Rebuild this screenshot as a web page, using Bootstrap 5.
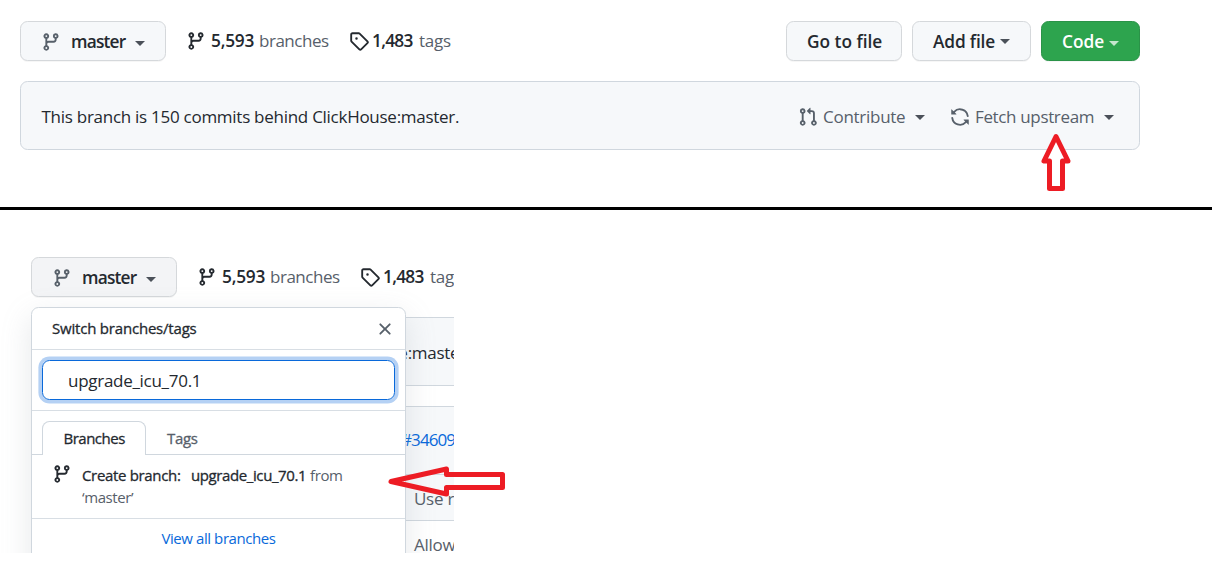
<!DOCTYPE html>
<html lang="en">
<head>
<meta charset="utf-8">
<title>Branches</title>
<link href="https://cdn.jsdelivr.net/npm/bootstrap@5.3.0/dist/css/bootstrap.min.css" rel="stylesheet">
<style>
body{margin:0;width:1212px;height:576px;overflow:hidden;background:#fff;color:#24292f;font:400 17px/24px "Open Sans","Noto Sans",sans-serif;letter-spacing:-.27px}
.ico{width:20px;height:20px;flex:none;fill:currentColor}
.pane-top{height:210px;border-bottom:3px solid #000;padding:21px 72px 0 20px}
.gh-btn{height:40px;border:1px solid #d5d8db;border-radius:7.5px;background:#f6f8fa;color:#24292f;font-weight:600;font-size:17.3px;line-height:24px;padding:1px 0 0 20px;display:flex;align-items:center;box-shadow:0 1px 0 rgba(27,31,36,.04);flex:none;white-space:nowrap}
.gh-btn .ico{color:#57606a}
.gh-btn.branch-btn{width:146px;padding-top:2px;letter-spacing:-.8px}
.branch-btn .label{width:64px;margin-left:10px}
.branch-btn .tri{margin-top:2px}
.gh-btn.pressed{background:#f3f4f6}
.tri{width:0;height:0;border:5px solid transparent;border-top-color:#4b5159;border-bottom:0;flex:none}
.stat{display:flex;align-items:center;height:40px;white-space:nowrap}
.stat .num{font-weight:600;font-size:17.3px;letter-spacing:-.2px}
.soft{color:#57606a}
.s-branches{margin-left:20px;width:163px}
.s-branches .num{width:48px;margin-left:5px}
.s-branches .soft{letter-spacing:-.48px}
.s-tags .num{width:47px;margin-left:3px;letter-spacing:-.7px}
.btn-go{width:116px}.btn-add{width:119px}.btn-code{width:99px}
.btn-add .label{width:67px;letter-spacing:-.15px}
.gh-btn.btn-code{background:#2da44e;border-color:#2a9348;color:#fff}
.btn-code .label{width:47px}
.btn-code .tri{border-top-color:#c5e6ce;margin-top:3px}
.notice{height:69px;border:1px solid #d0d7de;border-radius:7.5px;background:#f6f8fa;white-space:nowrap;padding:2px 25px 0 20.5px;display:flex;align-items:center}
.pane-top .notice{margin-top:20px}
.notice .act{color:#57606a}
.act .label{letter-spacing:-.35px}
.act .tri{margin-top:2px}
.act-c .label{width:92px;margin-left:5px}
.act-f .label{width:129px;margin-left:5px}
.act-c .label{letter-spacing:-.27px}
.act-c{margin-right:25px}
.pane-low{width:454px;height:343px;overflow:hidden;position:relative;padding:47px 0 0 31px}
.under{width:1120px}
.pane-low .notice{margin-top:20px}
.files{margin-top:20px;border:1px solid #d0d7de;border-radius:7.5px;height:200px;padding-left:382px}
.files>div{margin-left:-382px;padding-left:382px;border-bottom:1px solid #d0d7de;white-space:nowrap}
.f1{height:68px;background:#f6f8fa;line-height:66px;color:#0969da}
.f2{height:46px;background:#f6f8fa;line-height:48px;color:#57606a}
.f3{height:48px;line-height:47px;color:#57606a}
.f1 span{display:inline-block;margin-left:-13px;letter-spacing:-.9px}
.pop{position:absolute;left:31px;top:97px;width:375px;height:300px;background:#fff;border:1px solid #d0d7de;border-radius:7.5px;box-shadow:0 10px 30px rgba(140,149,159,.22);font-size:15px;line-height:22px}
.pop-head{height:42px;border-bottom:1px solid #d8dee4;padding:0 10px 0 20px}
.pop-head .title{letter-spacing:-.2px;margin-top:-2px}
.medium{font-weight:500;-webkit-text-stroke:.3px currentColor}
.pop-find{height:61px;border-bottom:1px solid #d8dee4;padding:10px 10px 0}
.pop-find .field{width:353px;height:40px;border:1px solid #0969da;border-radius:7.5px;box-shadow:0 0 0 3.6px #b5d1f4;padding:1px 0 0 25px;font-size:17px;line-height:38px;letter-spacing:-.28px}
.pop-tabs{height:44px;border-bottom:1px solid #d0d7de;padding:10px 0 0 10px}
.pop-tabs .on{width:104px;height:34px;border:1px solid #d0d7de;border-bottom:0;border-radius:7.5px 7.5px 0 0;background:#fff;padding:0 0 0 20.5px;line-height:32px;letter-spacing:-.5px}
.pop-tabs .off{margin-left:21px;line-height:35px;color:#57606a;letter-spacing:-.3px}
.pop-new{height:64px;border-bottom:1px solid #d8dee4;padding:9px 0 0 20px;white-space:nowrap}
.pop-new .txt{margin-left:10px}
.pop-new .nm{display:inline-block;width:119px;letter-spacing:-.4px}
.pop-new .cr{display:inline-block;width:109px;letter-spacing:-.33px}
.pop-new .soft{letter-spacing:-.4px}
.pop-all{color:#0969da;text-align:center;line-height:38px;letter-spacing:-.42px}
.pointer{position:absolute;fill:none;stroke:#ed1c24;stroke-width:5}
</style>
</head>
<body>
<svg class="d-none">
<symbol id="fork" viewBox="0 0 16 16"><path fill-rule="evenodd" d="M11.75 2.5a.75.75 0 100 1.5.75.75 0 000-1.5zm-2.25.75a2.25 2.25 0 113 2.122V6A2.5 2.5 0 0110 8.5H6a1 1 0 00-1 1v1.128a2.251 2.251 0 11-1.5 0V5.372a2.25 2.25 0 111.5 0v1.836A2.492 2.492 0 016 7h4a1 1 0 001-1v-.628A2.25 2.25 0 019.5 3.25zM4.25 12a.75.75 0 100 1.5.75.75 0 000-1.5zM3.5 3.25a.75.75 0 111.5 0 .75.75 0 01-1.5 0z"/></symbol>
<symbol id="tag" viewBox="0 0 16 16"><path fill-rule="evenodd" d="M2.5 7.775V2.75a.25.25 0 01.25-.25h5.025a.25.25 0 01.177.073l6.25 6.25a.25.25 0 010 .354l-5.025 5.025a.25.25 0 01-.354 0l-6.25-6.25a.25.25 0 01-.073-.177zm-1.5 0V2.75C1 1.784 1.784 1 2.75 1h5.025c.464 0 .91.184 1.238.513l6.25 6.25a1.75 1.75 0 010 2.474l-5.026 5.026a1.75 1.75 0 01-2.474 0l-6.25-6.25A1.75 1.75 0 011 7.775zM6 5a1 1 0 100 2 1 1 0 000-2z"/></symbol>
<symbol id="pull" viewBox="0 0 16 16"><path fill-rule="evenodd" d="M7.177 3.073L9.573.677A.25.25 0 0110 .854v4.792a.25.25 0 01-.427.177L7.177 3.427a.25.25 0 010-.354zM3.75 2.5a.75.75 0 100 1.5.75.75 0 000-1.5zm-2.25.75a2.25 2.25 0 113 2.122v5.256a2.251 2.251 0 11-1.5 0V5.372A2.25 2.25 0 011.5 3.25zM11 2.5h-1V4h1a1 1 0 011 1v5.628a2.251 2.251 0 101.5 0V5A2.5 2.5 0 0011 2.5zm1 10.25a.75.75 0 111.5 0 .75.75 0 01-1.5 0zM3.75 12a.75.75 0 100 1.5.75.75 0 000-1.5z"/></symbol>
<symbol id="sync" viewBox="0 0 16 16"><path fill-rule="evenodd" d="M8 2.5a5.487 5.487 0 00-4.131 1.869l1.204 1.204A.25.25 0 014.896 6H1.25A.25.25 0 011 5.75V2.104a.25.25 0 01.427-.177l1.38 1.38A7.001 7.001 0 0114.95 7.16a.75.75 0 11-1.49.178A5.501 5.501 0 008 2.5zM1.705 8.005a.75.75 0 01.834.656 5.501 5.501 0 009.592 2.97l-1.204-1.204a.25.25 0 01.177-.427h3.646a.25.25 0 01.25.25v3.646a.25.25 0 01-.427.177l-1.38-1.38A7.001 7.001 0 011.05 8.84a.75.75 0 01.656-.834z"/></symbol>
<symbol id="close" viewBox="0 0 16 16"><path d="M3.72 3.72a.75.75 0 011.06 0L8 6.94l3.22-3.22a.75.75 0 111.06 1.06L9.06 8l3.22 3.22a.75.75 0 11-1.06 1.06L8 9.06l-3.22 3.22a.75.75 0 01-1.06-1.06L6.94 8 3.72 4.78a.75.75 0 010-1.06z"/></symbol>
</svg>

<section class="pane-top position-relative">
  <div class="d-flex">
    <button class="gh-btn branch-btn text-start"><svg class="ico"><use href="#fork"/></svg><span class="label">master</span><span class="tri"></span></button>
    <div class="stat s-branches"><svg class="ico"><use href="#fork"/></svg><span class="num">5,593</span><span class="soft">branches</span></div>
    <div class="stat s-tags"><svg class="ico"><use href="#tag"/></svg><span class="num">1,483</span><span class="soft">tags</span></div>
    <div class="d-flex ms-auto" style="gap:10px">
      <button class="gh-btn btn-go">Go to file</button>
      <button class="gh-btn btn-add text-start"><span class="label">Add file</span><span class="tri"></span></button>
      <button class="gh-btn btn-code text-start"><span class="label">Code</span><span class="tri"></span></button>
    </div>
  </div>
  <div class="notice">
    <span class="me-auto">This branch is 150 commits behind ClickHouse:master.</span>
    <span class="act act-c d-flex align-items-center"><svg class="ico"><use href="#pull"/></svg><span class="label">Contribute</span><span class="tri"></span></span>
    <span class="act act-f d-flex align-items-center"><svg class="ico"><use href="#sync"/></svg><span class="label">Fetch upstream</span><span class="tri"></span></span>
  </div>
  <svg class="pointer" style="left:1036px;top:130px" width="40" height="66" viewBox="1036 130 40 66"><path fill="#fff" d="M1056 136.500L1044 161H1049.5V188.5H1062.5V161H1068Z" stroke-linejoin="round"/></svg>
</section>

<section class="pane-low">
  <div class="under">
    <div class="d-flex">
      <button class="gh-btn branch-btn pressed text-start"><svg class="ico"><use href="#fork"/></svg><span class="label">master</span><span class="tri"></span></button>
      <div class="stat s-branches"><svg class="ico"><use href="#fork"/></svg><span class="num">5,593</span><span class="soft">branches</span></div>
      <div class="stat s-tags"><svg class="ico"><use href="#tag"/></svg><span class="num">1,483</span><span class="soft">tags</span></div>
    </div>
    <div class="notice">This branch is 150 commits behind ClickHouse:master.</div>
    <div class="files">
      <div class="f1"><span>#34609</span></div>
      <div class="f2">Use r</div>
      <div class="f3">Allow</div>
    </div>
  </div>
  <div class="pop">
    <div class="pop-head d-flex align-items-center justify-content-between"><span class="title medium">Switch branches/tags</span><svg class="ico soft"><use href="#close"/></svg></div>
    <div class="pop-find"><div class="field">upgrade_icu_70.1</div></div>
    <div class="pop-tabs d-flex"><div class="on medium">Branches</div><div class="off medium">Tags</div></div>
    <div class="pop-new d-flex"><svg class="ico"><use href="#fork"/></svg><div class="txt"><span class="medium cr">Create branch:</span><span class="medium nm">upgrade_icu_70.1</span><span class="soft">from<br>‘master’</span></div></div>
    <div class="pop-all">View all branches</div>
  </div>
</section>
<svg class="pointer" style="left:384px;top:460px" width="126" height="42" viewBox="384 460 126 42"><path d="M391 481.5L446.500 469V474.500H502.500V487.500H446.500V494Z" stroke-linejoin="round"/></svg>
<script src="https://cdn.jsdelivr.net/npm/bootstrap@5.3.0/dist/js/bootstrap.bundle.min.js"></script>
</body>
</html>
